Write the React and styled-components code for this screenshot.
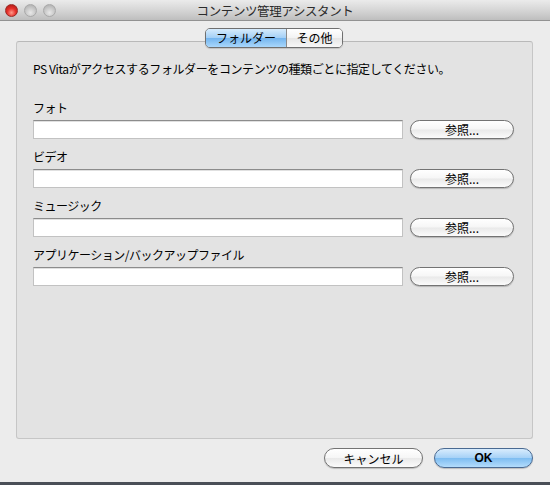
import styled, { createGlobalStyle } from 'styled-components';

const GlobalStyle = createGlobalStyle`
  html, body {
    margin: 0;
    padding: 0;
    background: #4a4f57;
  }
  body {
    font-family: "Noto Sans CJK JP", "Liberation Sans", sans-serif;
    font-size: 12px;
    color: #000;
  }
`;

const Window = styled.div`
  width: 550px;
  height: 482px;
  background: #ececec;
  display: flex;
  flex-direction: column;
  overflow: hidden;
`;

const TitleBar = styled.div`
  height: 21px;
  flex: none;
  display: flex;
  align-items: center;
  padding-left: 5px;
  box-sizing: border-box;
  background: linear-gradient(#ebebeb, #d6d6d6 50%, #bebebe);
  border-bottom: 1px solid #929292;
  position: relative;
`;

const Lights = styled.div`
  display: flex;
  gap: 6px;
`;

const Light = styled.span`
  width: 13px;
  height: 13px;
  border-radius: 50%;
  box-sizing: border-box;
  border: 1px solid ${p => (p.red ? '#9a2a25' : '#a9a9a9')};
  background: ${p =>
    p.red
      ? 'radial-gradient(circle at 50% 70%, #ff9a8a 0%, #e6302a 45%, #a4150f 100%)'
      : 'radial-gradient(circle at 50% 70%, #e8e8e8 0%, #c9c9c9 50%, #a8a8a8 100%)'};
`;

const Title = styled.div`
  position: absolute;
  left: 0;
  right: 0;
  top: 0;
  line-height: 21px;
  text-align: center;
  font-size: 12.5px;
  color: #2b2b2b;
  letter-spacing: -0.4px;
  pointer-events: none;
`;

const Body = styled.div`
  flex: 1;
  display: flex;
  flex-direction: column;
  padding: 7px 17px 0 16px;
`;

const TabRow = styled.div`
  display: flex;
  justify-content: center;
  position: relative;
  z-index: 1;
  margin-bottom: -7px;
  padding-right: 1px;
`;

const Segment = styled.div`
  display: flex;
  height: 18px;
  border: 1px solid #6f6f6f;
  border-radius: 5px;
  overflow: hidden;
  box-shadow: 0 1px 1px rgba(0, 0, 0, 0.15);
`;

const Tab = styled.div`
  width: ${p => p.w}px;
  display: flex;
  align-items: center;
  justify-content: center;
  font-size: 12px;
  line-height: 1;
  border-left: ${p => (p.first ? 'none' : '1px solid #8a8a8a')};
  background: ${p =>
    p.active
      ? 'linear-gradient(#d6ebfc, #a4d0f6 48%, #74b5ef 52%, #a9d7fb)'
      : 'linear-gradient(#ffffff, #f3f3f3 48%, #e6e6e6 52%, #f7f7f7)'};
`;

const GroupBox = styled.div`
  height: 398px;
  box-sizing: border-box;
  background: #e3e3e3;
  border: 1px solid #c6c6c6;
  border-top-color: #b9b9b9;
  border-radius: 3px;
  padding: 19px 16px 0 16px;
  display: flex;
  flex-direction: column;
`;

const Description = styled.div`
  line-height: 16px;
  font-size: 12px;
  letter-spacing: -0.4px;
  margin-bottom: 23px;
`;

const Field = styled.div`
  display: flex;
  flex-direction: column;
  gap: 4px;
  margin-bottom: 10px;
`;

const Label = styled.div`
  line-height: 16px;
  font-size: 12px;
  letter-spacing: -0.5px;
`;

const FieldRow = styled.div`
  display: flex;
  align-items: center;
  gap: 7px;
`;

const PathInput = styled.div`
  width: 370px;
  height: 19px;
  box-sizing: border-box;
  background: #fff;
  border: 1px solid #c2c2c2;
  border-top-color: #8c8c8c;
  box-shadow: inset 0 1px 0 #e0e0e0;
`;

const PillButton = styled.div`
  width: ${p => p.w}px;
  height: ${p => p.h || 19}px;
  box-sizing: border-box;
  border-radius: 10px;
  border: 1px solid ${p => (p.primary ? '#4a6a92' : '#737373')};
  display: flex;
  align-items: center;
  justify-content: center;
  font-size: 12px;
  font-weight: ${p => (p.bold ? 700 : 400)};
  font-family: ${p => (p.latin ? '"Liberation Sans", sans-serif' : 'inherit')};
  background: ${p =>
    p.primary
      ? 'linear-gradient(#d8ecfd, #a7d2f7 48%, #7ebdf1 52%, #b3dcfc)'
      : 'linear-gradient(#ffffff, #f6f6f6 48%, #e9e9e9 52%, #fbfbfb)'};
  box-shadow: 0 1px 1px rgba(0, 0, 0, 0.2);
`;

const Footer = styled.div`
  display: flex;
  justify-content: flex-end;
  gap: 11px;
  margin-top: 9px;
`;

const fields = ['フォト', 'ビデオ', 'ミュージック', 'アプリケーション/バックアップファイル'];

export default function App() {
  return (
    <>
      <GlobalStyle />
      <Window>
        <TitleBar>
          <Lights>
            <Light red />
            <Light />
            <Light />
          </Lights>
          <Title>コンテンツ管理アシスタント</Title>
        </TitleBar>
        <Body>
          <TabRow>
            <Segment>
              <Tab first active w={80}>フォルダー</Tab>
              <Tab w={55}>その他</Tab>
            </Segment>
          </TabRow>
          <GroupBox>
            <Description>PS Vitaがアクセスするフォルダーをコンテンツの種類ごとに指定してください。</Description>
            {fields.map(name => (
              <Field key={name}>
                <Label>{name}</Label>
                <FieldRow>
                  <PathInput />
                  <PillButton w={104}>参照...</PillButton>
                </FieldRow>
              </Field>
            ))}
          </GroupBox>
          <Footer>
            <PillButton w={99} h={20}>キャンセル</PillButton>
            <PillButton w={99} h={20} primary bold latin>OK</PillButton>
          </Footer>
        </Body>
      </Window>
    </>
  );
}
